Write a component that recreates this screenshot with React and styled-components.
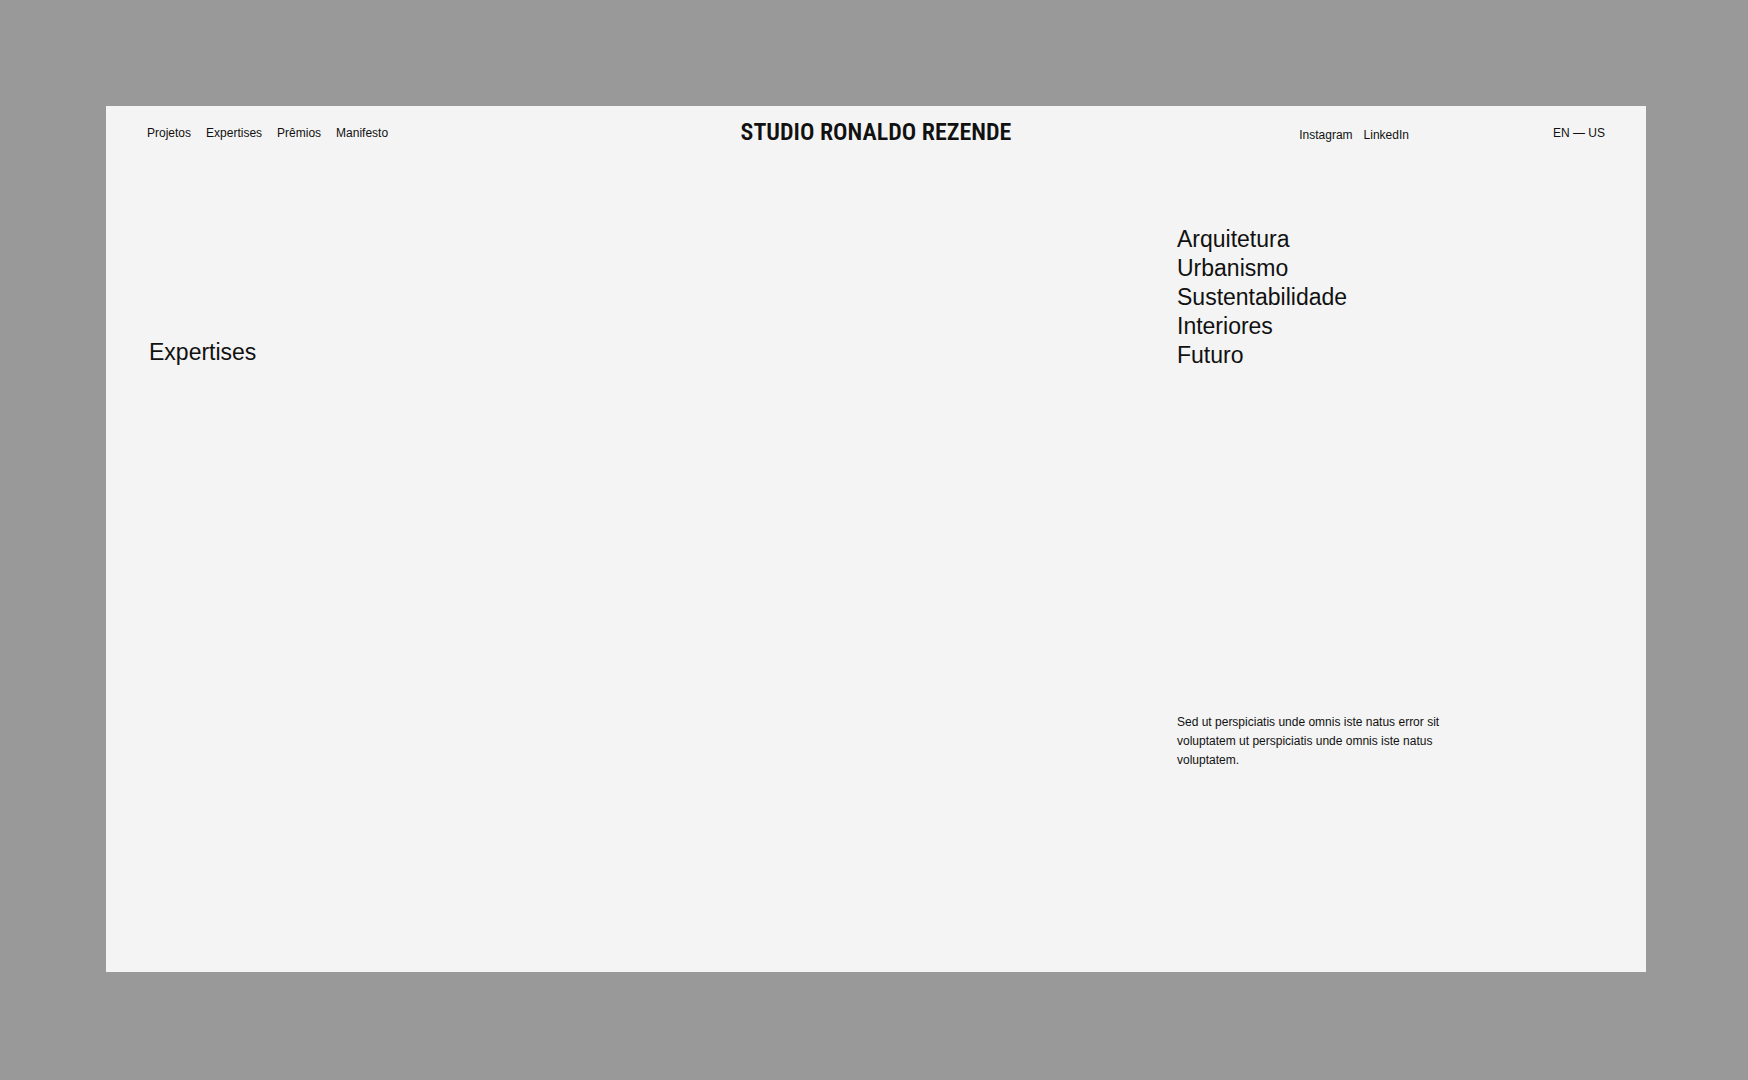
import React from "react";
import styled, { createGlobalStyle } from "styled-components";

const GlobalStyle = createGlobalStyle`
  * { box-sizing: border-box; margin: 0; padding: 0; }
  body {
    background: #999;
    color: #111;
    font-family: "Liberation Sans", Arial, sans-serif;
  }
`;

const Page = styled.div`
  min-height: 100vh;
  display: flex;
  padding: 106px 102px 108px 106px;
`;

const Panel = styled.div`
  flex: 1;
  padding: 0 41px 64px;
  background: #f4f4f4;
`;

const Header = styled.header`
  display: grid;
  grid-template-columns: 1fr auto 1fr;
  align-items: start;
  padding-top: 10px;
`;

const Nav = styled.nav`
  display: flex;
  gap: ${({ $gap }) => $gap}px;
  padding-top: ${({ $drop }) => $drop}px;
`;

const NavLink = styled.a`
  color: inherit;
  font-size: 12px;
  line-height: 16px;
  text-decoration: none;
  white-space: nowrap;
`;

const Logo = styled.a`
  color: inherit;
  font-family: "Roboto Condensed", "Liberation Sans Narrow", sans-serif;
  font-size: 24px;
  font-weight: 600;
  line-height: 32px;
  text-decoration: none;
  white-space: nowrap;
`;

const Aside = styled.div`
  display: flex;
  align-items: flex-start;
  justify-content: flex-end;
  gap: 144px;
`;

const LanguageButton = styled.button`
  padding-top: 9px;
  border: 0;
  background: none;
  color: inherit;
  font-family: inherit;
  font-size: 12px;
  line-height: 16px;
  white-space: nowrap;
  cursor: pointer;
`;

const Content = styled.main`
  display: grid;
  grid-template-columns: 1fr 428px;
  padding-top: 77px;
`;

const Title = styled.h1`
  padding: 113px 0 0 2px;
  font-size: 23px;
  font-weight: 400;
  line-height: 29px;
`;

const Topics = styled.ul`
  list-style: none;
  font-size: 23px;
  line-height: 29px;
`;

const Description = styled.p`
  width: 272px;
  margin-top: 343px;
  font-size: 12px;
  line-height: 19px;
`;

const sections = ["Projetos", "Expertises", "Prêmios", "Manifesto"];
const networks = ["Instagram", "LinkedIn"];
const topics = ["Arquitetura", "Urbanismo", "Sustentabilidade", "Interiores", "Futuro"];

export default function App() {
  return (
    <>
      <GlobalStyle />
      <Page>
        <Panel>
          <Header>
            <Nav $gap={15} $drop={9} aria-label="Principal">
              {sections.map((name) => (
                <NavLink key={name} href={"#" + name.toLowerCase()}>{name}</NavLink>
              ))}
            </Nav>
            <Logo href="#">STUDIO RONALDO REZENDE</Logo>
            <Aside>
              <Nav $gap={11} $drop={11} aria-label="Redes sociais">
                {networks.map((name) => (
                  <NavLink key={name} href={"#" + name.toLowerCase()}>{name}</NavLink>
                ))}
              </Nav>
              <LanguageButton type="button">EN — US</LanguageButton>
            </Aside>
          </Header>
          <Content>
            <Title>Expertises</Title>
            <section>
              <Topics>
                {topics.map((topic) => <li key={topic}>{topic}</li>)}
              </Topics>
              <Description>
                Sed ut perspiciatis unde omnis iste natus error sit voluptatem ut perspiciatis unde omnis iste natus voluptatem.
              </Description>
            </section>
          </Content>
        </Panel>
      </Page>
    </>
  );
}
